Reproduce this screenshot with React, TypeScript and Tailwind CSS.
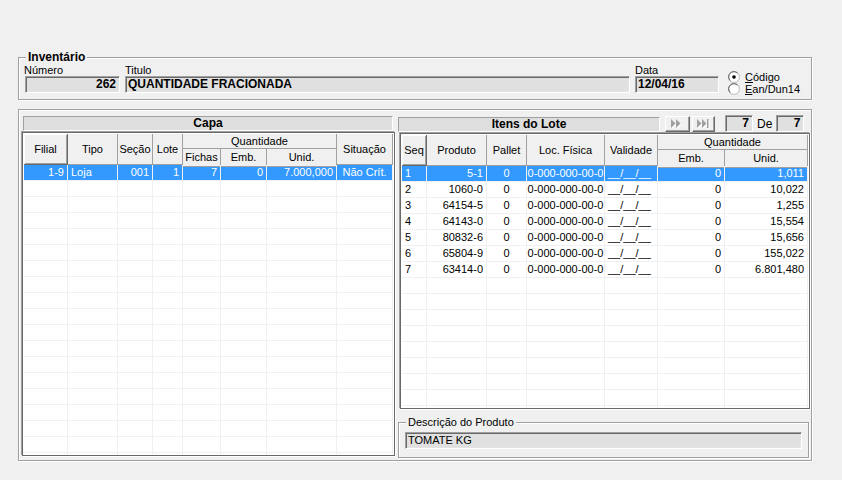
import React from 'react';

// classic win32 bevels
const etched = 'border border-[#a0a0a0] shadow-[inset_1px_1px_0_#fff,1px_1px_0_#fff]';
const sunken =
  'border border-t-[#a0a0a0] border-l-[#a0a0a0] border-b-white border-r-white shadow-[inset_1px_1px_0_#696969,inset_-1px_-1px_0_#e3e3e3]';
const raised =
  'border border-t-white border-l-white border-b-[#696969] border-r-[#696969] shadow-[inset_-1px_-1px_0_#a0a0a0]';
const gridFrame = 'border border-[#696969] shadow-[-1px_-1px_0_#a0a0a0,1px_1px_0_#fff] bg-white';

const alignCls = {
  l: 'text-left pl-[3px]',
  r: 'text-right pr-[3px]',
  c: 'text-center',
};

type Col = { w: string; align: 'l' | 'r' | 'c' };

const capaCols: Col[] = [
  { w: 'w-[44px]', align: 'r' },
  { w: 'w-[50px]', align: 'l' },
  { w: 'w-[35px]', align: 'r' },
  { w: 'w-[30px]', align: 'r' },
  { w: 'w-[38px]', align: 'r' },
  { w: 'w-[46px]', align: 'r' },
  { w: 'w-[70px]', align: 'r' },
  { w: 'w-[56px]', align: 'c' },
];

const itensCols: Col[] = [
  { w: 'w-[25px]', align: 'l' },
  { w: 'w-[60px]', align: 'r' },
  { w: 'w-[40px]', align: 'c' },
  { w: 'w-[78px]', align: 'c' },
  { w: 'w-[53px]', align: 'l' },
  { w: 'w-[67px]', align: 'r' },
  { w: 'w-[83px]', align: 'r' },
];

const capaRows: string[][] = [['1-9', 'Loja', '001', '1', '7', '0', '7.000,000', 'Não Crít.']];

const itensRows: string[][] = [
  ['1', '5-1', '0', '0-000-000-00-0', '__/__/__', '0', '1,011'],
  ['2', '1060-0', '0', '0-000-000-00-0', '__/__/__', '0', '10,022'],
  ['3', '64154-5', '0', '0-000-000-00-0', '__/__/__', '0', '1,255'],
  ['4', '64143-0', '0', '0-000-000-00-0', '__/__/__', '0', '15,554'],
  ['5', '80832-6', '0', '0-000-000-00-0', '__/__/__', '0', '15,656'],
  ['6', '65804-9', '0', '0-000-000-00-0', '__/__/__', '0', '155,022'],
  ['7', '63414-0', '0', '0-000-000-00-0', '__/__/__', '0', '6.801,480'],
];

function Hdr({ w, children, isRaised }: { w: string; children: React.ReactNode; isRaised?: boolean }) {
  return (
    <div
      className={`${w} shrink-0 flex items-center justify-center bg-[#f0f0f0] ${
        isRaised
          ? 'border-r border-b border-[#696969] shadow-[inset_1px_1px_0_#fff,inset_-1px_-1px_0_#a0a0a0]'
          : 'border-r border-b border-[#a0a0a0]'
      }`}
    >
      {children}
    </div>
  );
}

function QtdHdr({ w, subs }: { w: string; subs: { w: string; label: string }[] }) {
  return (
    <div className={`${w} shrink-0 flex flex-col`}>
      <div className="h-[15px] leading-[14px] text-center bg-[#f0f0f0] border-r border-b border-[#a0a0a0]">
        Quantidade
      </div>
      <div className="flex flex-1">
        {subs.map((s) => (
          <Hdr key={s.label} w={s.w}>
            {s.label}
          </Hdr>
        ))}
      </div>
    </div>
  );
}

function Rows({ cols, rows, count }: { cols: Col[]; rows: string[][]; count: number }) {
  return (
    <>
      {Array.from({ length: count }).map((_, i) => {
        const row = rows[i];
        const selected = i === 0;
        return (
          <div key={i} className={`flex h-[16px] ${selected ? 'bg-[#3399ff] text-white' : ''}`}>
            {cols.map((c, j) => (
              <div
                key={j}
                className={`${c.w} shrink-0 h-[16px] leading-[15px] border-r border-b border-[#f0f0f0] whitespace-nowrap overflow-hidden ${alignCls[c.align]}`}
              >
                {row ? row[j] : ''}
              </div>
            ))}
          </div>
        );
      })}
    </>
  );
}

function NavIcon({ last }: { last?: boolean }) {
  const tri = (
    <>
      <polygon points="0,0 4.5,4.5 0,9" />
      <polygon points="5,0 9.5,4.5 5,9" />
      {last && <rect x="10" y="0" width="1.5" height="9" />}
    </>
  );
  return (
    <svg width="13" height="10" viewBox="0 0 13 10">
      <g fill="#fff" transform="translate(1,1)">{tri}</g>
      <g fill="#a0a0a0">{tri}</g>
    </svg>
  );
}

function Radio({ checked }: { checked?: boolean }) {
  return (
    <svg width="12" height="12" viewBox="0 0 12 12" className="shrink-0">
      <circle cx="6" cy="6" r="5.5" fill="#fff" stroke="#a0a0a0" />
      <path d="M2.2 9.5 A5 5 0 0 1 9.5 2.2" fill="none" stroke="#696969" />
      <path d="M9.8 2.6 A5 5 0 0 1 2.6 9.8" fill="none" stroke="#e3e3e3" />
      {checked && <circle cx="6" cy="6" r="1.8" fill="#000" />}
    </svg>
  );
}

export default function App() {
  return (
    <div className="w-[842px] h-[480px] overflow-hidden bg-[#f0f0f0] text-black text-[11px] font-['Liberation_Sans',Arial,sans-serif] pt-[57px] pl-[18px]">
      {/* Inventário */}
      <div className={`relative w-[794px] h-[43px] ${etched}`}>
        <span className="absolute -top-[8px] left-[7px] px-[2px] bg-[#f0f0f0] text-[12px] font-bold leading-[14px]">
          Inventário
        </span>
        <div className="flex pt-[7px] pl-[6px]">
          <div className="flex flex-col w-[95px]">
            <span className="h-[11px] leading-[11px] -ml-[1px]">Número</span>
            <div className={`h-[17px] leading-[14px] ${sunken} bg-[#e0e0e0] text-right pr-[3px] text-[12px] font-bold`}>
              262
            </div>
          </div>
          <div className="flex flex-col w-[505px] ml-[5px]">
            <span className="h-[11px] leading-[11px]">Titulo</span>
            <div className={`h-[17px] leading-[14px] ${sunken} bg-[#e0e0e0] pl-[2px] text-[12px] font-bold`}>
              QUANTIDADE FRACIONADA
            </div>
          </div>
          <div className="flex flex-col w-[84px] ml-[5px]">
            <span className="h-[11px] leading-[11px]">Data</span>
            <div className={`h-[17px] leading-[14px] ${sunken} bg-[#e0e0e0] pl-[2px] text-[12px] font-bold`}>
              12/04/16
            </div>
          </div>
          <div className="flex flex-col ml-[9px] mt-[6px]">
            <div className="flex items-center h-[12px] gap-[5px]">
              <Radio checked />
              <span className="leading-[12px]">
                <span className="underline">C</span>ódigo
              </span>
            </div>
            <div className="flex items-center h-[12px] gap-[5px]">
              <Radio />
              <span className="leading-[12px]">
                <span className="underline">E</span>an/Dun14
              </span>
            </div>
          </div>
        </div>
      </div>

      {/* Capa / Itens */}
      <div className={`w-[794px] h-[352px] mt-[9px] ${etched} flex pl-[3px] pt-[6px]`}>
        {/* Capa */}
        <div className="flex flex-col w-[373px]">
          <div
            className={`ml-[1px] w-[370px] h-[15px] leading-[13px] text-center text-[12px] font-bold bg-[#dedede] border border-t-[#a0a0a0] border-l-[#a0a0a0] border-b-white border-r-white`}
          >
            Capa
          </div>
          <div className={`mt-[1px] w-[373px] h-[324px] overflow-hidden ${gridFrame} p-[1px]`}>
            <div className="flex h-[31px]">
              <Hdr w="w-[44px]" isRaised>
                Filial
              </Hdr>
              <Hdr w="w-[50px]">Tipo</Hdr>
              <Hdr w="w-[35px]">Seção</Hdr>
              <Hdr w="w-[30px]">Lote</Hdr>
              <QtdHdr
                w="w-[154px]"
                subs={[
                  { w: 'w-[38px]', label: 'Fichas' },
                  { w: 'w-[46px]', label: 'Emb.' },
                  { w: 'w-[70px]', label: 'Unid.' },
                ]}
              />
              <Hdr w="w-[56px]">Situação</Hdr>
            </div>
            <Rows cols={capaCols} rows={capaRows} count={19} />
          </div>
        </div>

        {/* Itens do Lote */}
        <div className="flex flex-col ml-[3px] w-[412px]">
          <div className="flex items-center h-[16px]">
            <div className="w-[262px] h-[15px] leading-[13px] text-center text-[12px] font-bold bg-[#dedede] border border-t-[#a0a0a0] border-l-[#a0a0a0] border-b-white border-r-white">
              Itens do Lote
            </div>
            <div className={`ml-[5px] -mt-[1px] w-[25px] h-[16px] flex items-center justify-center bg-[#f0f0f0] ${raised}`}>
              <NavIcon />
            </div>
            <div className={`ml-[2px] -mt-[1px] w-[23px] h-[16px] flex items-center justify-center bg-[#f0f0f0] ${raised}`}>
              <NavIcon last />
            </div>
            <div className={`ml-[10px] -mt-[1px] w-[28px] h-[17px] leading-[14px] text-right pr-[3px] text-[12px] font-bold bg-[#e0e0e0] ${sunken}`}>
              7
            </div>
            <span className="px-[4px] text-[12px] leading-[14px]">De</span>
            <div className={`-mt-[1px] w-[28px] h-[17px] leading-[14px] text-right pr-[3px] text-[12px] font-bold bg-[#e0e0e0] ${sunken}`}>
              7
            </div>
          </div>
          <div className={`mt-[1px] ml-[2px] w-[410px] h-[276px] overflow-hidden ${gridFrame} p-[1px]`}>
            <div className="flex h-[31px]">
              <Hdr w="w-[25px]" isRaised>
                Seq
              </Hdr>
              <Hdr w="w-[60px]">Produto</Hdr>
              <Hdr w="w-[40px]">Pallet</Hdr>
              <Hdr w="w-[78px]">Loc. Física</Hdr>
              <Hdr w="w-[53px]">Validade</Hdr>
              <QtdHdr
                w="w-[150px]"
                subs={[
                  { w: 'w-[67px]', label: 'Emb.' },
                  { w: 'w-[83px]', label: 'Unid.' },
                ]}
              />
            </div>
            <Rows cols={itensCols} rows={itensRows} count={16} />
          </div>

          {/* Descrição do Produto */}
          <div className={`relative mt-[13px] w-[411px] h-[36px] ${etched} pl-[6px] pt-[9px]`}>
            <span className="absolute -top-[7px] left-[7px] px-[2px] bg-[#f0f0f0] leading-[13px]">
              Descrição do Produto
            </span>
            <div className={`w-[397px] h-[17px] leading-[14px] ${sunken} bg-[#e0e0e0] pl-[2px]`}>TOMATE KG</div>
          </div>
        </div>
      </div>
    </div>
  );
}
